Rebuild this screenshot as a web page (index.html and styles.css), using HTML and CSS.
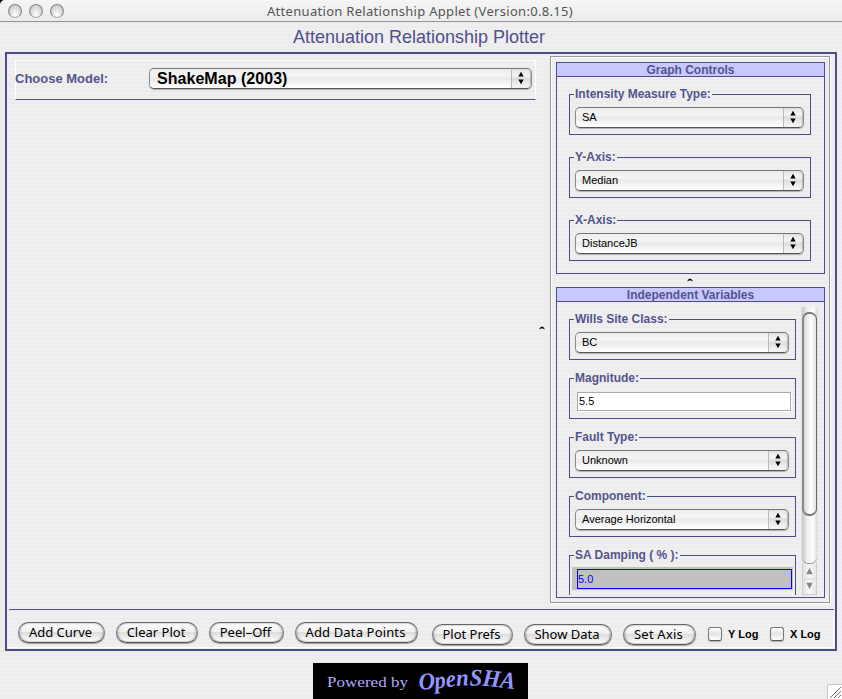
FILE: index.html
```html
<!DOCTYPE html>
<html lang="en">
<head>
<meta charset="utf-8">
<title>Attenuation Relationship Applet</title>
<link rel="stylesheet" href="styles.css">
</head>
<body>
<svg width="0" height="0" class="defs"><defs>
<symbol id="arrows" viewBox="0 0 6 14"><path d="M3 .7L5.700 5.600H.3zM3 13.300L.3 8.400h5.400z"/></symbol>
<symbol id="caret" viewBox="0 0 6 4"><path d="M0 3.600Q3-2.500 6 3.600L4.300 2.800Q3 1.800 1.700 2.800z"/></symbol>
</defs></svg>
<div class="window">
  <header class="titlebar">
    <i class="light"></i><i class="light"></i><i class="light"></i>
    <span class="wintitle">Attenuation Relationship Applet (Version:0.8.15)</span>
  </header>
  <h1>Attenuation Relationship Plotter</h1>
  <main class="frame">
    <div class="upper">
      <section class="plot">
        <div class="model">
          <label>Choose Model:</label>
          <div class="combo big"><span>ShakeMap (2003)</span><b><svg><use href="#arrows"/></svg></b></div>
        </div>
      </section>
      <div class="divider"><svg><use href="#caret"/></svg></div>
      <aside class="side">
        <section class="group graph">
          <h2>Graph Controls</h2>
          <div class="fields">
            <fieldset><legend>Intensity Measure Type:</legend><div class="combo"><span>SA</span><b><svg><use href="#arrows"/></svg></b></div></fieldset>
            <fieldset><legend>Y-Axis:</legend><div class="combo"><span>Median</span><b><svg><use href="#arrows"/></svg></b></div></fieldset>
            <fieldset><legend>X-Axis:</legend><div class="combo"><span>DistanceJB</span><b><svg><use href="#arrows"/></svg></b></div></fieldset>
          </div>
        </section>
        <div class="hdivider"><svg><use href="#caret"/></svg></div>
        <section class="group vars">
          <h2>Independent Variables</h2>
          <div class="scroller">
            <div class="fields">
              <fieldset><legend>Wills Site Class:</legend><div class="combo"><span>BC</span><b><svg><use href="#arrows"/></svg></b></div></fieldset>
              <fieldset><legend>Magnitude:</legend><div class="input">5.5</div></fieldset>
              <fieldset><legend>Fault Type:</legend><div class="combo"><span>Unknown</span><b><svg><use href="#arrows"/></svg></b></div></fieldset>
              <fieldset><legend>Component:</legend><div class="combo"><span>Average Horizontal</span><b><svg><use href="#arrows"/></svg></b></div></fieldset>
              <fieldset class="damping"><legend>SA Damping ( % ):</legend><div class="gray"><div>5.0</div></div></fieldset>
            </div>
            <div class="scrollbar">
              <div class="track"><div class="thumb"></div></div>
              <svg class="steps" viewBox="0 0 15 32"><path d="M7.500 4L11.200 11H3.800zM7.500 28L11.200 21H3.800z" fill="#858585"/><path d="M1 16.500h13" stroke="#d2d2d2"/></svg>
            </div>
          </div>
        </section>
      </aside>
    </div>
    <footer class="buttons">
      <button class="b1">Add Curve</button><button class="b2">Clear Plot</button><button class="b3">Peel–Off</button><button class="b4">Add Data Points</button><button class="b5 low">Plot Prefs</button><button class="b6 low">Show Data</button><button class="b7 low">Set Axis</button>
      <label class="check"><i></i>Y Log</label><label class="check x"><i></i>X Log</label>
    </footer>
  </main>
  <div class="brand">
    <svg class="logo" viewBox="0 0 215 36">
      <defs><path id="wave" d="M106 26.500C122 27 138 22.500 158 22.500C178 22.500 185 25 212 27"/></defs>
      <text x="14" y="24" class="powered" textLength="81" lengthAdjust="spacingAndGlyphs">Powered by</text>
      <text class="opensha"><textPath href="#wave" textLength="96" lengthAdjust="spacingAndGlyphs">OpenSHA</textPath></text>
    </svg>
    <svg class="grip" viewBox="0 0 15 15"><path d="M0 0h15v15H0z" fill="#fff"/><path d="M.5 15V.5H15" fill="none" stroke="#c8c8c8"/><path d="M3 14L14 3M7 14l7-7M11 14l3-3" stroke="#777"/></svg>
  </div>
</div>
</body>
</html>
```
FILE: styles.css
```css
* { box-sizing: border-box; }
body { margin: 0; background: #000; font-family: "Liberation Sans", Arial, sans-serif; }
.defs { display: none; }
.window {
  width: 842px; height: 699px; overflow: hidden; border-radius: 5px 0 0 0;
  display: flex; flex-direction: column;
  background: repeating-linear-gradient(#efefef 0 2px, #ececec 2px 4px);
}
.titlebar {
  height: 22px; flex: none; display: flex; align-items: center; gap: 7px; padding: 0 0 0 8px;
  border-bottom: 1px solid #949494;
  background: linear-gradient(#fafafa99, #e6e6e633);
}
.light {
  width: 14px; height: 14px; border-radius: 50%; border: 1px solid #858585; border-bottom-color: #aaa;
  background: radial-gradient(ellipse at 50% 85%, #fff 0, #e4e4e4 45%, #b5b5b5 100%);
}
.wintitle { margin-left: 196px; font: 13px/20px "Noto Sans", sans-serif; color: #555; white-space: nowrap; letter-spacing: .3px; }
h1 { margin: 0; height: 30px; flex: none; font-size: 18px; font-weight: 400; line-height: 30px; text-align: center; color: #50508c; padding-right: 4px; }
.frame { margin: 0 5px; height: 599px; flex: none; border: 2px solid #4d4d87; display: flex; flex-direction: column; padding: 2px 2px 0 2px; }
.upper { display: flex; height: 553px; }
.plot { width: 527px; padding: 4px 0 0 6px; }
.model { height: 40px; border: 1px solid #fff; border-bottom-color: #50508c; display: flex; padding-top: 7px; }
.model label { width: 133px; font-size: 13px; font-weight: 700; line-height: 21px; color: #54548e; letter-spacing: 0; margin-left: -1px; }
.combo {
  height: 21px; display: flex; justify-content: space-between; border-radius: 5px;
  border: 1px solid #8d8d8d; border-bottom-color: #555; border-top-color: #777;
  background: linear-gradient(#ececec, #f5f5f5 35%, #e9e9e9 50%, #fff 95%);
  box-shadow: 0 1px 1px #0004; font-size: 11px; line-height: 19px;
}
.combo span { padding-left: 6px; }
.combo b { width: 20px; border-left: 1px solid #bbb; border-radius: 0 4px 4px 0; display: flex; align-items: center; justify-content: center; padding-right: 1px; background: linear-gradient(#e4e4e4, #f5f5f5 35%, #dedede 50%, #f8f8f8); box-shadow: inset -1px 0 1px #8888; }
.combo svg { width: 6px; height: 14px; margin-top: -1px; }
.combo.big { width: 383px; margin-left: 1px; font-size: 16px; font-weight: 700; letter-spacing: .04px; }
.combo.big span { padding-left: 7px; }
.divider { width: 14px; display: flex; padding: 270px 0 0 3px; }
.divider svg, .hdivider svg { width: 6px; height: 4px; }
.side { width: 280px; height: 547px; border: 1px solid #969696; box-shadow: inset 1px 1px #fff, 1px 1px #fff; padding: 5px 4px 4px 5px; }
.group { border: 1px solid #4d4d87; }
.graph { height: 212px; }
.vars { height: 311px; }
h2 { margin: 0; height: 14px; background: #c8c8fe; border-bottom: 1px solid #4d4d87; font-size: 12px; line-height: 15px; text-align: center; color: #54548e; }
.hdivider { height: 13px; display: flex; justify-content: center; padding: 4px 1px 0 0; }
.graph .fields { padding: 11px 13px 0 12px; display: flex; flex-direction: column; gap: 16px; }
fieldset { margin: 0; height: 47px; min-width: 0; border: 1px solid #4d4d87; padding: 6px 6px 0 4px; }
legend { padding: 0 1px; font-size: 12px; font-weight: 700; line-height: 13px; height: 13px; color: #54548e; }
fieldset .combo { margin-left: 1px; }
.scroller { display: flex; height: 293px; overflow: hidden; }
.scroller .fields { width: 239px; padding: 11px 0 0 12px; display: flex; flex-direction: column; gap: 12px; }
.scroller fieldset { flex: none; }
.input { height: 19px; margin: 1px -2px 0 3px; border: 1px solid #aaa; background: #fff; font-size: 11px; line-height: 17px; padding-left: 1px; box-shadow: 1px 1px #fff; }
fieldset.damping { padding: 5px 2px 0 2px; }
.damping legend { margin-left: 2px; }
.gray { height: 23px; background: #c0c0c0; padding: 2px 1px 1px 5px; }
.gray div { height: 20px; border: 1px solid #00f; color: #00f; font-size: 11px; line-height: 19px; }
.scrollbar { margin: 5px 0 0 6px; width: 15px; height: 288px; background: linear-gradient(90deg, #ddd, #f8f8f8 50%, #e4e4e4); }
.track { height: 256px; padding-top: 5px; border-radius: 0 0 7px 7px; background: linear-gradient(90deg, #c4c4c4, #eee 35%, #fcfcfc 75%, #ddd); box-shadow: 0 1px 1px #888; }
.thumb { height: 204px; border: 2px solid #777; border-color: #777 #666 #777 #888; border-width: 2px 1px 2px 2px; border-radius: 7px; background: linear-gradient(90deg, #d8d8d8, #f0f0f0 35%, #fff 55%, #e2e2e2); }
.steps { display: block; width: 15px; height: 32px; border: 1px solid #ccc; border-top: 0; }
.buttons { margin: 0 -1px 0 0; height: 39px; border-top: 1px solid #50508c; display: flex; padding: 12px 0 0 9px; box-shadow: inset 0 -1px #fff, inset -1px 0 #fff; }
button {
  height: 21px; border: 1px solid #777; border-top-color: #666; border-bottom-color: #555; border-radius: 11px; padding: 0 2px 1px 0;
  margin: 0 11px 0 0; font: 13px/18px "Noto Sans", sans-serif; color: #000; white-space: nowrap;
  background: linear-gradient(#fff, #f0f0f0 45%, #ddd 50%, #fff); box-shadow: 0 1px 1px #0005, inset 1px 0 2px #0004, inset -1px 0 2px #0004;
}
.low { margin-top: 2px; }
.b1 { width: 87px; } .b2 { width: 82px; } .b3 { width: 75px; } .b4 { width: 123px; margin-right: 14px; letter-spacing: .15px; }
.b5 { width: 81px; } .b6 { width: 88px; } .b7 { width: 73px; letter-spacing: .2px; }
.check { margin: 5px 0 0 1px; width: 62px; display: flex; height: 14px; gap: 6px; font-size: 11px; font-weight: 700; line-height: 15px; white-space: nowrap; }
.check i { width: 14px; height: 14px; border: 1px solid #777; border-bottom-color: #555; border-radius: 3px; background: linear-gradient(#fff, #e4e4e4 50%, #fff); box-shadow: 0 1px 1px #0004; }
.check.x { margin-left: 0; }
.brand { display: flex; margin-top: 12px; height: 36px; }
.logo { width: 215px; height: 36px; margin-left: 313px; background: #000; }
.powered { font: 15px "Liberation Serif", serif; fill: #b4a8ff; }
.opensha { font: italic bold 24px "Liberation Serif", serif; fill: #9494ff; }
.grip { width: 15px; height: 15px; margin: 21px 0 0 299px; }
```
